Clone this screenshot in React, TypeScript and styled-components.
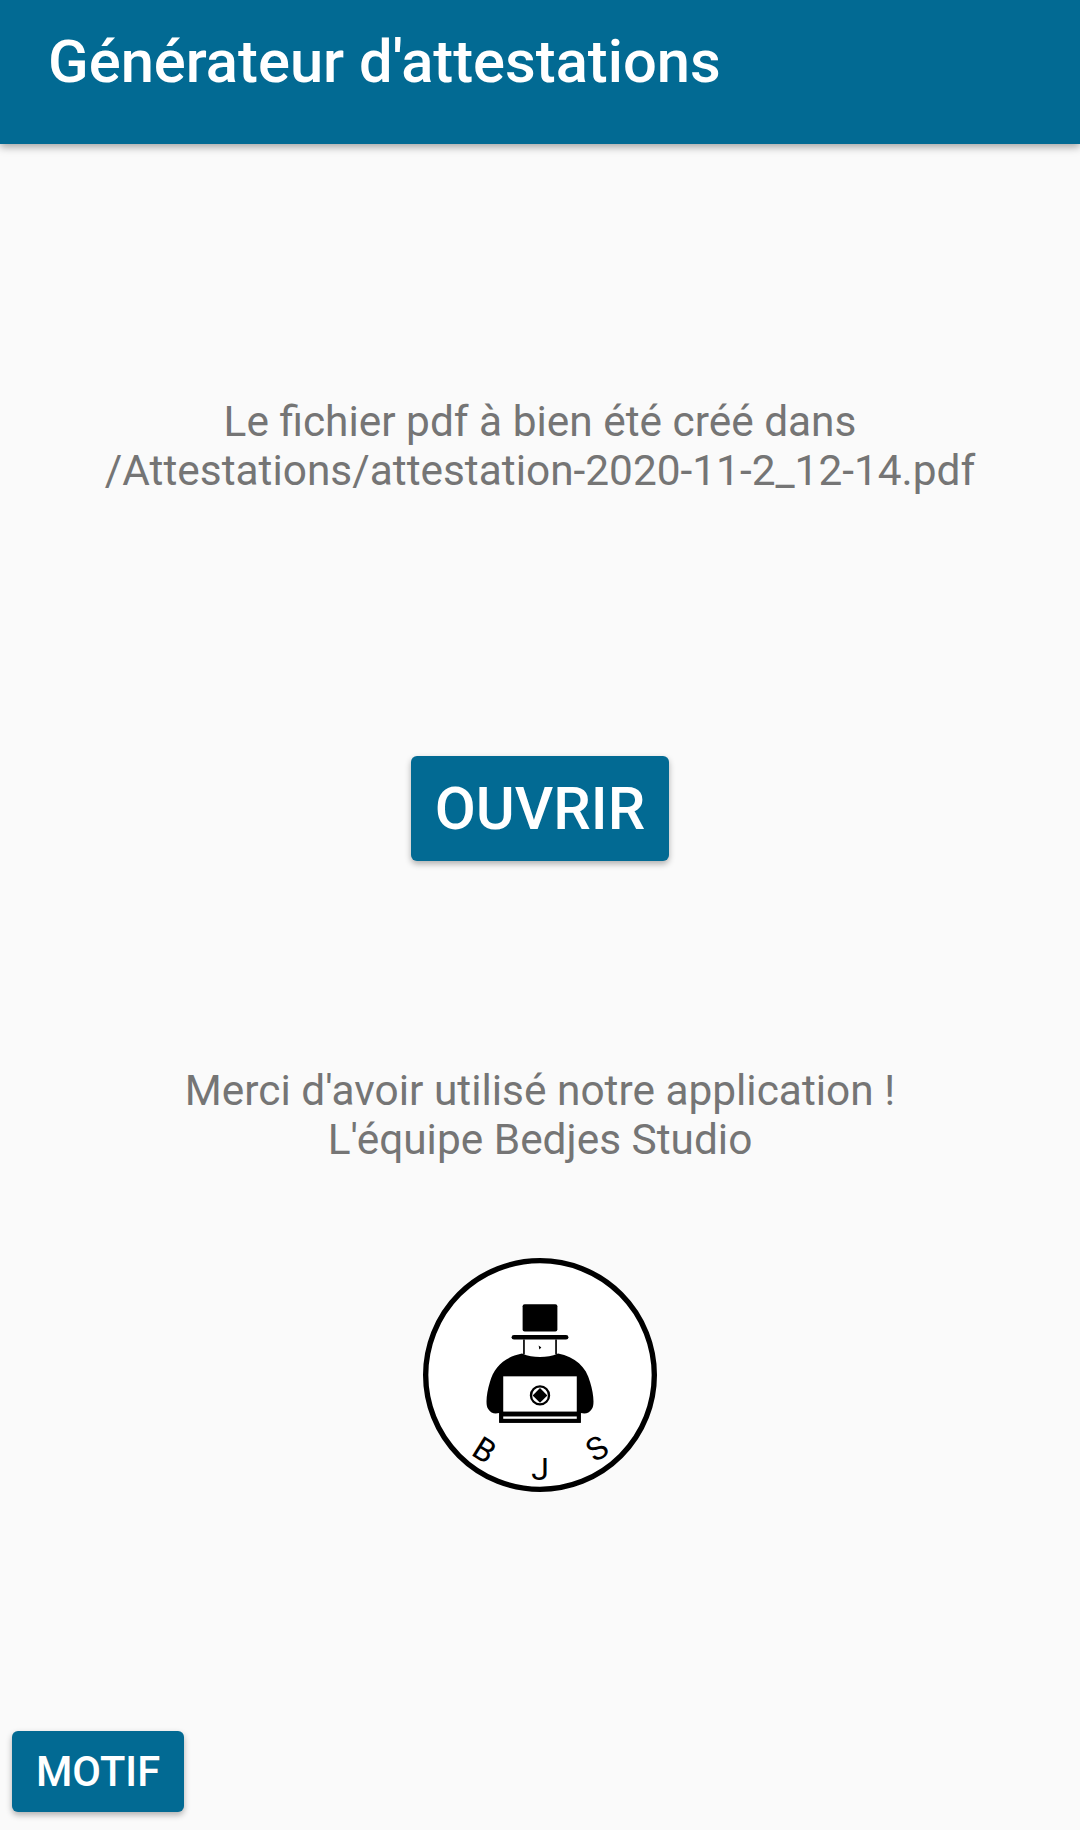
import React from "react";
import styled, { createGlobalStyle } from "styled-components";

const GlobalStyle = createGlobalStyle`
    html, body {
        margin: 0;
        padding: 0;
        background: #fafafa;
    }
    * {
        box-sizing: border-box;
    }
`;

const Screen = styled.div`
    width: 1080px;
    height: 1830px;
    display: flex;
    flex-direction: column;
    background: #fafafa;
    font-family: Roboto, "Liberation Sans", sans-serif;
    overflow: hidden;
`;

const Header = styled.header`
    height: 144px;
    flex: none;
    padding: 29px 0 0 48px;
    background: #026a93;
    box-shadow: 0 3px 8px rgba(0, 0, 0, 0.35);
    color: #fff;
    font-size: 59.7px;
    line-height: 66px;
    font-weight: 500;
`;

const Content = styled.main`
    flex: 1;
    display: flex;
    flex-direction: column;
    align-items: center;
    padding-top: 253px;
`;

const Message = styled.p<{ $gap: number }>`
    margin: 0 0 ${(p) => p.$gap}px;
    color: #757575;
    font-size: 42.4px;
    line-height: 49px;
    text-align: center;
    white-space: nowrap;
`;

const Button = styled.button<{ $large?: boolean }>`
    border: 0;
    border-radius: 6px;
    background: #026a93;
    color: #fff;
    font-family: inherit;
    font-weight: 500;
    text-transform: uppercase;
    width: ${(p) => (p.$large ? 258 : 172)}px;
    height: ${(p) => (p.$large ? 105 : 81)}px;
    font-size: ${(p) => (p.$large ? 59.6 : 41.6)}px;
    box-shadow: 0 3px 6px rgba(0, 0, 0, 0.3);
    padding: 0;
`;

const OpenButton = styled(Button)`
    margin-bottom: 205px;
`;

const MotifButton = styled(Button)`
    align-self: flex-start;
    margin: auto 0 18px 12px;
`;

const LogoSvg = styled.svg`
    display: block;
    width: 234px;
    height: 234px;
`;

const LogoLetter = styled.text`
    font-family: Roboto, sans-serif;
    font-size: 96px;
    fill: #000;
`;

const Logo = () => (
    <LogoSvg viewBox="0 0 700 700">
        <circle cx="350" cy="350" r="342" fill="#fff" stroke="#000" strokeWidth="16" />
        <rect x="298" y="138" width="104" height="82" rx="6" fill="#000" />
        <rect x="265" y="230" width="170" height="14" rx="7" fill="#000" />
        <path d="M302 244V288M398 244V288" stroke="#000" strokeWidth="5" fill="none" />
        <path
            d="M296 286C315 294 330 296 350 296C370 296 385 294 404 286C455 296 488 325 500 372C510 405 514 440 505 452C497 466 485 466 472 464V493H228V464C215 466 203 466 195 452C186 440 190 405 200 372C212 325 245 296 296 286Z"
            fill="#000"
        />
        <path d="M346 262L354 268L348 274Z" fill="#000" />
        <rect x="240" y="354" width="220" height="106" fill="#fff" />
        <circle cx="350" cy="411" r="27" fill="#fff" stroke="#000" strokeWidth="7" />
        <path d="M350 389L372 411L350 433L328 411Z" fill="#000" />
        <path d="M228 460H472V493H228Z" fill="#000" />
        <rect x="240" y="474" width="220" height="7" fill="#fff" />
        <LogoLetter transform="translate(166 603) rotate(32)" textAnchor="middle">
            B
        </LogoLetter>
        <LogoLetter transform="translate(350 663)" textAnchor="middle">
            J
        </LogoLetter>
        <LogoLetter transform="translate(538 598) rotate(-32)" textAnchor="middle">
            S
        </LogoLetter>
    </LogoSvg>
);

export default function App() {
    return (
        <Screen>
            <GlobalStyle />
            <Header>Générateur d'attestations</Header>
            <Content>
                <Message $gap={261}>
                    Le fichier pdf à bien été créé dans
                    <br />
                    /Attestations/attestation-2020-11-2_12-14.pdf
                </Message>
                <OpenButton $large>Ouvrir</OpenButton>
                <Message $gap={94}>
                    Merci d'avoir utilisé notre application !
                    <br />
                    L'équipe Bedjes Studio
                </Message>
                <Logo />
                <MotifButton>Motif</MotifButton>
            </Content>
        </Screen>
    );
}
